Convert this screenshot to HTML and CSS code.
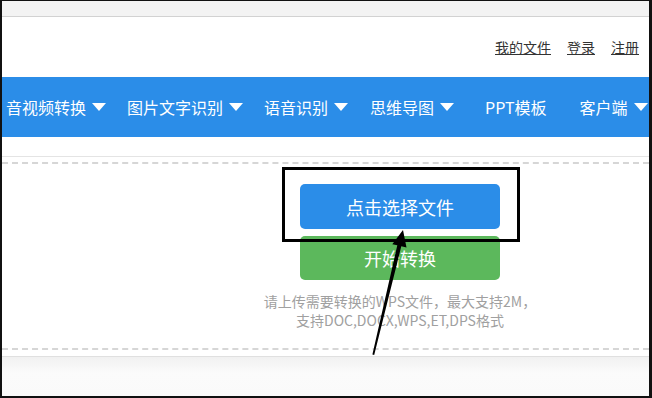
FILE: index.html
```html
<!DOCTYPE html>
<html lang="zh-CN">
<head>
  <meta charset="UTF-8" />
  <meta name="viewport" content="width=device-width, initial-scale=1.0" />
  <title>WPS文件转换</title>
  <link rel="stylesheet" href="styles.css">
</head>
<body>

  <div class="frame">
    <div class="topbar"></div>

    <header class="header">
      <a href="#">我的文件</a>
      <a href="#">登录</a>
      <a href="#">注册</a>
    </header>

    <nav class="nav">
      <a href="#" class="drop">音视频转换</a>
      <a href="#" class="drop">图片文字识别</a>
      <a href="#" class="drop">语音识别</a>
      <a href="#" class="drop">思维导图</a>
      <a href="#" class="plain">PPT模板</a>
      <a href="#" class="drop">客户端</a>
    </nav>

    <div class="spacer"></div>

    <section class="upload">
      <button class="btn btn-blue" type="button">点击选择文件</button>
      <button class="btn btn-green" type="button">开始转换</button>
      <p class="hint">请上传需要转换的WPS文件，最大支持2M，<br>支持DOC,DOCX,WPS,ET,DPS格式</p>
    </section>

    <div class="footer"></div>

    <!-- annotation over the screenshot -->
    <div class="mark"></div>
    <svg class="arrow" width="652" height="398" viewBox="0 0 652 398">
      <polygon points="403,230 406.5,247.5 401.3,246.3 374.2,355 372.4,354.6 397.3,245.3 392.3,244.3" fill="#000"/>
    </svg>
  </div>

</body>
</html>
```

FILE: styles.css
```css
body {
  margin: 0;
  font-family: "Noto Sans CJK SC", "Microsoft YaHei", sans-serif;
  background-color: #fff;
}

.frame {
  position: relative;
  width: 652px;
  height: 398px;
  box-sizing: border-box;
  border-style: solid;
  border-color: #111;
  border-width: 1px 3px 2px 2px;
  overflow: hidden;
  background-color: #fff;
}

.topbar {
  height: 15px;
  background-color: #f3f3f3;
  border-bottom: 1px solid #d2d2d2;
}

.header {
  height: 60px;
  display: flex;
  justify-content: flex-end;
  align-items: center;
  gap: 16px;
  padding-right: 10px;
}

.header a {
  color: #333;
  font-size: 14px;
  text-decoration: underline;
}

.nav {
  height: 60px;
  display: flex;
  align-items: center;
  gap: 21px;
  padding-left: 4px;
  background-color: #2b8de8;
  white-space: nowrap;
}

.nav a {
  color: #fff;
  font-size: 16px;
  text-decoration: none;
  display: flex;
  align-items: center;
}

.nav a.drop::after {
  content: "";
  margin-left: 6px;
  border-left: 7px solid transparent;
  border-right: 7px solid transparent;
  border-top: 8px solid #fff;
}

.nav a:nth-child(4) {
  margin-left: 1px;
}

.nav a.plain {
  margin: 0 12px 0 10px;
}

.spacer {
  height: 19px;
  border-bottom: 1px solid #e4e4e4;
  margin-bottom: 5px;
}

.upload {
  display: flex;
  flex-direction: column;
  align-items: center;
  padding: 20px 0 18px 149px;
  border-top: 2px dashed #d6d6d6;
  border-bottom: 2px dashed #d6d6d6;
}

.btn {
  width: 200px;
  border: none;
  border-radius: 5px;
  color: #fff;
  font-family: inherit;
  font-size: 18px;
  cursor: pointer;
}

.btn-blue {
  height: 45px;
  background-color: #2b8de8;
}

.btn-green {
  height: 44px;
  margin-top: 7px;
  background-color: #5cb85c;
}

.hint {
  margin: 12px 0 0;
  font-size: 14px;
  line-height: 19px;
  color: #a0a0a0;
  text-align: center;
}

.footer {
  margin-top: 6px;
  height: 40px;
  border-top: 1px solid #e0e0e0;
  background: linear-gradient(#f1f1f1, #fbfbfb 40%, #fafafa);
}

.mark {
  position: absolute;
  left: 280px;
  top: 166px;
  width: 238px;
  height: 75px;
  box-sizing: border-box;
  border: 3px solid #000;
}

.arrow {
  position: absolute;
  left: -2px;
  top: -1px;
}
```
